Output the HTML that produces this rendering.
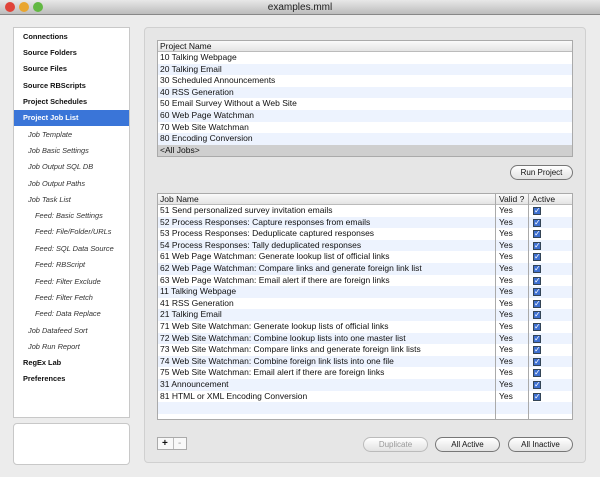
<!DOCTYPE html>
<html><head><style>
*{margin:0;padding:0;box-sizing:border-box}
body{width:600px;height:477px;background:#ececec;font-family:"Liberation Sans",sans-serif;font-size:8.5px;color:#111;position:relative;overflow:hidden}
.tb{position:absolute;left:0;top:0;width:600px;height:15px;background:linear-gradient(#e8e8e8,#bcbcbc);border-bottom:1px solid #888;text-align:center;font-size:10px;line-height:15px;color:#222}
.dot{position:absolute;top:2px;width:10px;height:10px;border-radius:50%}
.side{position:absolute;left:13px;top:27px;width:117px;height:391px;background:#fff;border:1px solid #c8c8c8}
.side div{position:absolute;left:0;width:115px;height:16px;line-height:16px;font-size:7.4px}
.b{font-weight:bold;padding-left:9px}
.i1{font-style:italic;padding-left:14px;color:#333}
.i2{font-style:italic;padding-left:21px;color:#333}
.sel{background:#3a75d8;color:#fff}
.sb2{position:absolute;left:13px;top:423px;width:117px;height:42px;background:#fff;border:1px solid #c8c8c8;border-radius:4px}
.main{position:absolute;left:144px;top:27px;width:442px;height:436px;background:#e6e6e6;border:1px solid #d0d0d0;border-radius:4px}
.tbl{position:absolute;background:#fff;border:1px solid #aaa}
.row{position:absolute;left:0;right:0;height:11.6px;line-height:11.6px;padding-left:2px;white-space:nowrap}
.alt{background:#edf3fe}
.hd{background:linear-gradient(#fafafa,#e4e4e4);border-bottom:1px solid #bbb}
.btn{position:absolute;height:15px;border:1px solid #777;border-radius:8px;background:linear-gradient(#fff,#e2e2e2);font-size:8px;text-align:center;line-height:13px}
.cb{position:absolute;left:4px;top:2px;width:8px;height:8px;background:#3d6fd0;border:1px solid #345;color:#fff;font-size:8px;line-height:6px;text-align:center}
</style></head><body>
<div class="tb">examples.mml
<span class="dot" style="left:5px;background:#e0443a"></span>
<span class="dot" style="left:19px;background:#e9a630"></span>
<span class="dot" style="left:33px;background:#62b843"></span></div>
<div class="side">
<div class="b" style="top:1px">Connections</div>
<div class="b" style="top:17px">Source Folders</div>
<div class="b" style="top:33px">Source Files</div>
<div class="b" style="top:50px">Source RBScripts</div>
<div class="b" style="top:66px">Project Schedules</div>
<div class="b sel" style="top:82px">Project Job List</div>
<div class="i1" style="top:99px">Job Template</div>
<div class="i1" style="top:115px">Job Basic Settings</div>
<div class="i1" style="top:131px">Job Output SQL DB</div>
<div class="i1" style="top:148px">Job Output Paths</div>
<div class="i1" style="top:164px">Job Task List</div>
<div class="i2" style="top:180px">Feed: Basic Settings</div>
<div class="i2" style="top:196px">Feed: File/Folder/URLs</div>
<div class="i2" style="top:213px">Feed: SQL Data Source</div>
<div class="i2" style="top:229px">Feed: RBScript</div>
<div class="i2" style="top:246px">Feed: Filter Exclude</div>
<div class="i2" style="top:262px">Feed: Filter Fetch</div>
<div class="i2" style="top:278px">Feed: Data Replace</div>
<div class="i1" style="top:295px">Job Datafeed Sort</div>
<div class="i1" style="top:311px">Job Run Report</div>
<div class="b" style="top:327px">RegEx Lab</div>
<div class="b" style="top:343px">Preferences</div>
</div>
<div class="sb2"></div>
<div class="main"></div>
<div class="tbl" style="left:157px;top:40px;width:416px;height:117px">
<div class="row hd" style="top:0;height:11px;line-height:11px">Project Name</div>
<div class="row" style="top:11px">10 Talking Webpage</div>
<div class="row alt" style="top:22.6px">20 Talking Email</div>
<div class="row" style="top:34.2px">30 Scheduled Announcements</div>
<div class="row alt" style="top:45.8px">40 RSS Generation</div>
<div class="row" style="top:57.4px">50 Email Survey Without a Web Site</div>
<div class="row alt" style="top:69px">60 Web Page Watchman</div>
<div class="row" style="top:80.6px">70 Web Site Watchman</div>
<div class="row alt" style="top:92.2px">80 Encoding Conversion</div>
<div class="row" style="top:103.8px;background:#cfcfcf">&lt;All Jobs&gt;</div>
</div>
<div class="btn" style="left:510px;top:165px;width:63px">Run Project</div>
<div class="tbl" style="left:157px;top:193px;width:416px;height:227px">
<div class="row hd" style="top:0;height:11px;line-height:11px">Job Name<span style="position:absolute;left:341px">Valid ?</span><span style="position:absolute;left:374px">Active</span></div>
<div id="rows"></div>
<div style="position:absolute;left:337px;top:0;bottom:0;border-left:1px solid #aaa"></div>
<div style="position:absolute;left:370px;top:0;bottom:0;border-left:1px solid #aaa"></div>
</div>
<div style="position:absolute;left:157px;top:437px;width:30px;height:13px;border:1px solid #aaa;background:#f8f8f8;font-size:10px;line-height:11px"><span style="position:absolute;left:4px;font-weight:bold">+</span><span style="position:absolute;left:15px;border-left:1px solid #bbb;padding-left:4px;color:#999;height:11px">-</span></div>
<div class="btn" style="left:363px;top:437px;width:65px;color:#999;border-color:#bbb">Duplicate</div>
<div class="btn" style="left:435px;top:437px;width:65px">All Active</div>
<div class="btn" style="left:508px;top:437px;width:65px">All Inactive</div>
<script>
var j=["51 Send personalized survey invitation emails","52 Process Responses: Capture responses from emails","53 Process Responses: Deduplicate captured responses","54 Process Responses: Tally deduplicated responses","61 Web Page Watchman: Generate lookup list of official links","62 Web Page Watchman: Compare links and generate foreign link list","63 Web Page Watchman: Email alert if there are foreign links","11 Talking Webpage","41 RSS Generation","21 Talking Email","71 Web Site Watchman: Generate lookup lists of official links","72 Web Site Watchman: Combine lookup lists into one master list","73 Web Site Watchman: Compare links and generate foreign link lists","74 Web Site Watchman: Combine foreign link lists into one file","75 Web Site Watchman: Email alert if there are foreign links","31 Announcement","81 HTML or XML Encoding Conversion","",""];
var h="";j.forEach(function(t,i){h+='<div class="row'+(i%2?' alt':'')+'" style="top:'+(11+i*11.6)+'px">'+t+(t?'<span style="position:absolute;left:341px">Yes</span><span style="position:absolute;left:371px;top:0;width:20px;height:11px"><span class="cb">✓</span></span>':'')+'</div>';});
document.getElementById("rows").innerHTML=h;
</script>
</body></html>
